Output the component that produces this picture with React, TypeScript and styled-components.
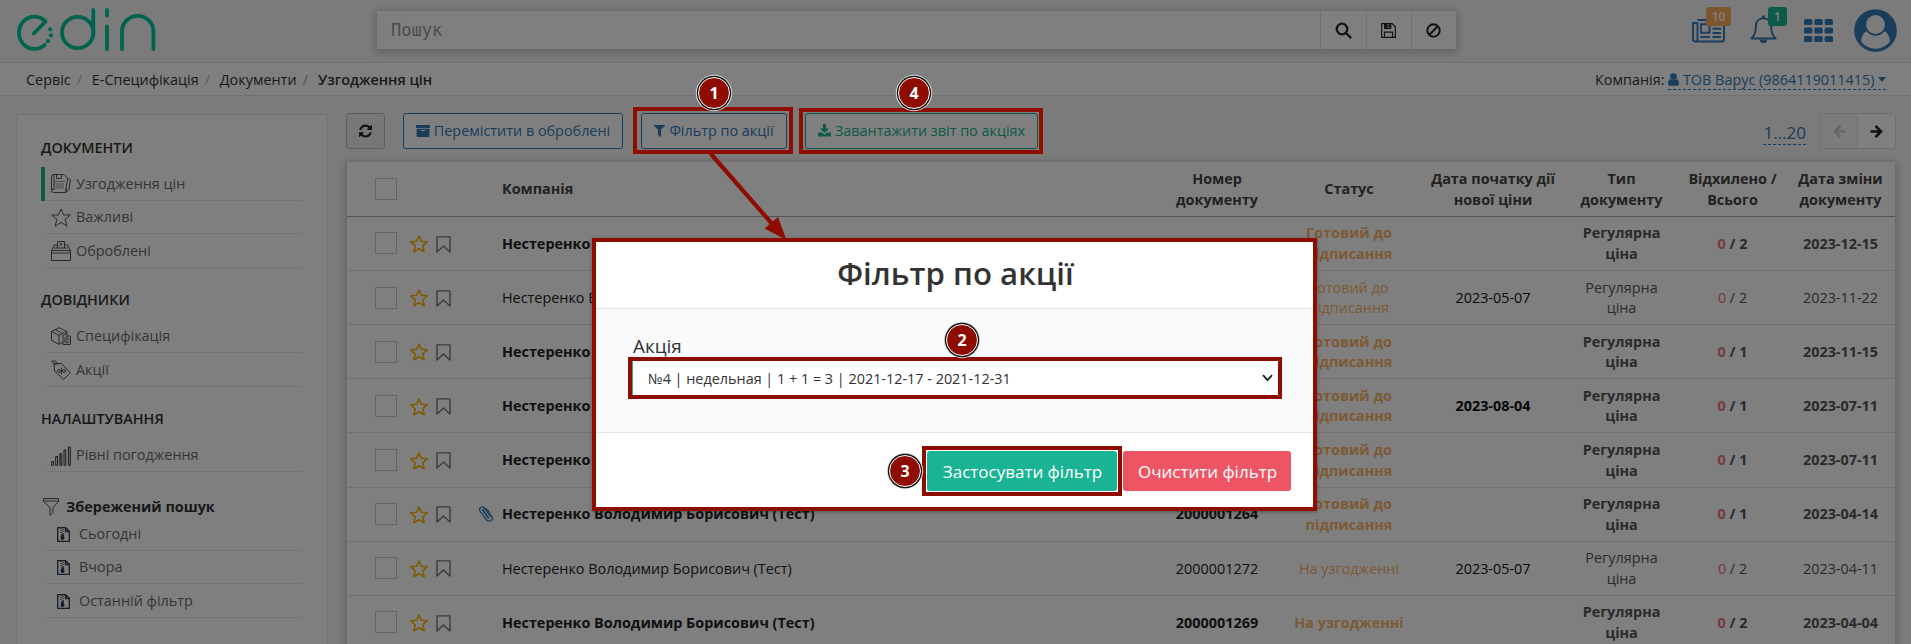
import React from 'react';
import styled, { createGlobalStyle, css } from 'styled-components';

const GlobalStyle = createGlobalStyle`
  *, *::before, *::after { box-sizing: border-box; }
  html, body { margin: 0; padding: 0; overflow: hidden; }
  body {
    background: #f7f7f7;
    color: #333;
    font-family: "Open Sans", "Noto Sans", sans-serif;
    font-size: 14.4px;
    line-height: 1.42857;
  }
  button, input, select { font: inherit; color: inherit; margin: 0; }
  svg { display: block; flex: none; }
`;

const BLUE = '#337ab7';
const GREEN = '#1ab394';
const MARK = '#8f0d00';

const Page = styled.div`
  position: relative;
  width: 1911px;
  height: 644px;
  overflow: hidden;
`;

/* ---------- top bar ---------- */

const TopBar = styled.header`
  display: flex;
  align-items: flex-start;
  height: 63px;
  border-bottom: 1px solid #e3e3e3;
`;
const LogoBox = styled.div`
  width: 377px;
  padding: 6px 0 0 14px;
`;
const SearchBar = styled.div`
  display: flex;
  width: 1079px;
  height: 38px;
  margin-top: 11px;
  background: #fff;
  box-shadow: 0 2px 8px 2px rgba(120, 120, 150, 0.4);
`;
const SearchInput = styled.input`
  flex: 1;
  min-width: 0;
  padding: 0 14px;
  border: 0;
  outline: 0;
  background: transparent;
  font-family: "DejaVu Sans Mono", monospace;
  font-size: 17px;
  &::placeholder { color: #999; opacity: 1; }
`;
const SearchButton = styled.button<{ $w: number }>`
  display: flex;
  align-items: center;
  justify-content: center;
  width: ${p => p.$w}px;
  padding: 0 1px 0 0;
  border: 0;
  border-left: 1px solid #e2e2e2;
  background: transparent;
  color: #222;
`;
const TopIcons = styled.div`
  display: flex;
  align-items: flex-start;
  margin-left: 236px;
  color: ${BLUE};
`;
const TopIcon = styled.div<{ $ml?: number; $mt: number }>`
  position: relative;
  margin-left: ${p => p.$ml ?? 0}px;
  margin-top: ${p => p.$mt}px;
`;
const Badge = styled.span<{ $bg: string; $x: number; $y: number; $w: number }>`
  position: absolute;
  left: ${p => p.$x}px;
  top: ${p => p.$y}px;
  width: ${p => p.$w}px;
  height: 19px;
  border-radius: 3px;
  background: ${p => p.$bg};
  color: #fff;
  font-size: 12px;
  font-weight: 600;
  line-height: 19px;
  text-align: center;
`;

/* ---------- breadcrumbs ---------- */

const CrumbBar = styled.nav`
  display: flex;
  justify-content: space-between;
  height: 33px;
  padding: 0 25px 0 26px;
  border-bottom: 1px solid #e3e3e3;
  background: #fff;
`;
const Crumbs = styled.ol`
  display: flex;
  margin: 0;
  padding: 0;
  list-style: none;
  line-height: 33px;
`;
const Crumb = styled.li`
  & + &::before { content: "/"; padding: 0 9.8px 0 6px; color: #bbb; }
  &:last-child { font-weight: 600; }
`;
const Company = styled.div`
  display: flex;
  align-items: flex-start;
  gap: 4px;
  line-height: 21px;
  padding-top: 6px;
`;
const CompanyLink = styled.a`
  display: flex;
  align-items: center;
  gap: 3.5px;
  height: 21px;
  color: ${BLUE};
  border-bottom: 1px dashed ${BLUE};
`;

/* ---------- layout ---------- */

const Body = styled.div`
  display: flex;
  align-items: flex-start;
  padding: 17px 15px 0 16px;
`;
const Sidebar = styled.aside`
  width: 312px;
  height: 620px;
  margin-top: 1px;
  padding: 23px 24px;
  border: 1px solid #e4e4ee;
  background: #fff;
`;
const Group = styled.section<{ $mb: number; $gap: number }>`
  margin-bottom: ${p => p.$mb}px;
  ul { margin: ${p => p.$gap}px 0 0; padding: 0; list-style: none; }
`;
const GroupTitle = styled.h4`
  display: flex;
  align-items: center;
  height: 21px;
  margin: 0;
  font-size: 14.4px;
  font-weight: 600;
  color: #333;
`;
const SavedTitle = styled(GroupTitle)`
  gap: 7px;
  padding: 1px 0 0 2px;
  font-weight: 700;
`;
const SideItem = styled.li<{ $active?: boolean; $saved?: boolean }>`
  display: flex;
  align-items: center;
  gap: ${p => (p.$saved ? 9 : 5)}px;
  height: 33.5px;
  margin-left: 4px;
  padding: 2px 0 0 ${p => (p.$saved ? 12 : 6)}px;
  border-bottom: 1px solid #e7eaec;
  color: #676a6c;
  ${p => p.$active && css`box-shadow: -4px 0 0 ${GREEN};`}
`;
const Main = styled.main`
  width: 1550px;
  margin-left: 18px;
`;
const Toolbar = styled.div`
  display: flex;
  height: 36px;
`;
const ToolButton = styled.button<{ $w: number; $ml?: number; $color: string; $fill?: string }>`
  display: flex;
  align-items: center;
  justify-content: center;
  gap: 4px;
  width: ${p => p.$w}px;
  height: 36px;
  margin-left: ${p => p.$ml ?? 0}px;
  padding: 0;
  border: 1px solid ${p => p.$color};
  border-radius: 3px;
  background: ${p => p.$fill ?? '#fff'};
  color: ${p => p.$color};
  white-space: nowrap;
`;
const RefreshButton = styled(ToolButton)`
  border-color: #bbb;
  color: #222;
`;
const Pager = styled.div`
  display: flex;
  margin-left: auto;
`;
const Range = styled.a`
  height: 32px;
  margin-right: 14px;
  border-bottom: 1px dashed ${BLUE};
  color: ${BLUE};
  font-size: 17px;
  line-height: 39px;
`;
const PageButton = styled.button<{ $side: 'l' | 'r' }>`
  display: flex;
  align-items: center;
  justify-content: center;
  width: ${p => (p.$side === 'l' ? 37 : 39)}px;
  height: 36px;
  padding: 0;
  border: 1px solid #e0e0e0;
  border-right-width: ${p => (p.$side === 'l' ? 0 : 1)}px;
  border-radius: ${p => (p.$side === 'l' ? '3px 0 0 3px' : '0 3px 3px 0')};
  background: ${p => (p.$side === 'l' ? '#f9f9f9' : '#fff')};
  color: ${p => (p.$side === 'l' ? '#ccc' : '#222')};
`;

/* ---------- table ---------- */

const Table = styled.div`
  width: 1548px;
  height: 600px;
  margin: 13px 0 0 1px;
  background: #fff;
  box-shadow: 0 2px 8px 2px rgba(120, 120, 150, 0.4);
`;
const Row = styled.div<{ $bold?: boolean; $head?: boolean }>`
  display: grid;
  grid-template-columns: 62px 61px 32px 645px 140px 124px 164px 93px 129px 87px;
  grid-template-rows: 100%;
  align-items: center;
  height: ${p => (p.$head ? 54.9 : 54.14)}px;
  border-bottom: 1px solid ${p => (p.$head ? '#aaa' : '#dde0e2')};
  font-weight: ${p => (p.$head || p.$bold ? 700 : 400)};
  color: ${p => (p.$head ? '#444' : '#555')};
`;
const Cell = styled.div<{ $color?: string }>`
  padding-top: 1.2px;
  text-align: center;
  white-space: pre;
  color: ${p => p.$color ?? 'inherit'};
  b { font-weight: inherit; color: #ee7280; }
`;
const NameCell = styled(Cell)`
  text-align: left;
`;
const Check = styled.span`
  width: 22px;
  height: 22px;
  margin-left: 28px;
  border: 1px solid #c8c8c8;
`;
const Marks = styled.div`
  display: flex;
  align-items: center;
  gap: 8px;
  padding: 1.500px 0 0 1px;
`;
const Clip = styled.div`
  padding-left: 8px;
`;

/* ---------- modal ---------- */

const Backdrop = styled.div`
  position: absolute;
  inset: 0;
  background: rgba(0, 0, 0, 0.5);
`;
const Modal = styled.div`
  position: absolute;
  left: 592px;
  top: 238px;
  display: flex;
  flex-direction: column;
  width: 725px;
  height: 273px;
  border: 4px solid ${MARK};
  background: #fff;
  box-shadow: 0 1px 4px rgba(0, 0, 0, 0.3);
`;
const ModalHead = styled.div`
  height: 67px;
  padding-left: 2px;
  border-bottom: 1px solid #e5e5e5;
  color: #333;
  font-size: 31.2px;
  font-weight: 600;
  line-height: 62px;
  text-align: center;
`;
const ModalBody = styled.div`
  flex: 1;
  padding: 25px 31px 0 32px;
  background: #f8fafc;
`;
const Label = styled.label`
  display: block;
  height: 23px;
  padding-left: 5px;
  font-size: 18.9px;
  line-height: 25px;
`;
const Highlight = styled.div`
  border: 4px solid ${MARK};
`;
const SelectBox = styled(Highlight)`
  display: flex;
  align-items: center;
  height: 42px;
  background: #fff;
`;
const Select = styled.select`
  flex: 1;
  height: 34px;
  padding: 2px 15px 0;
  border: 0;
  border-left: 1px solid ${GREEN};
  outline: 0;
  appearance: none;
  background: transparent;
  font-size: 14.4px;
`;
const Chevron = styled.span`
  margin-right: 5px;
`;
const ModalFoot = styled.div`
  display: flex;
  justify-content: flex-end;
  height: 75px;
  padding: 13px 22px 0 0;
  border-top: 1px solid #e5e5e5;
`;
const ApplyBox = styled(Highlight)`
  width: 200px;
  height: 50px;
  margin-right: 1px;
  padding: 1px;
`;
const ModalButton = styled.button<{ $bg: string; $w: number; $mt?: number }>`
  width: ${p => p.$w}px;
  height: 40px;
  margin-top: ${p => p.$mt ?? 0}px;
  padding: 2px 0 0 1px;
  border: 0;
  border-radius: 3px;
  background: ${p => p.$bg};
  color: #fff;
  font-size: 17px;
  white-space: nowrap;
`;

/* ---------- step marks ---------- */

const Frame = styled(Highlight)<{ $x: number; $y: number; $w: number; $h: number }>`
  position: absolute;
  left: ${p => p.$x}px;
  top: ${p => p.$y}px;
  width: ${p => p.$w}px;
  height: ${p => p.$h}px;
`;
const Step = styled.div<{ $x: number; $y: number }>`
  position: absolute;
  left: ${p => p.$x - 16}px;
  top: ${p => p.$y - 16}px;
  width: 32px;
  height: 32px;
  border: 1px solid #fff;
  border-radius: 50%;
  background: ${MARK};
  box-shadow: 0 0 0 1.2px #111, 0 0 0 2.2px #ddd;
  color: #fff;
  font-size: 16px;
  font-weight: 700;
  line-height: 30px;
  text-align: center;
`;
const Arrow = styled.svg`
  position: absolute;
  left: 700px;
  top: 150px;
`;

/* ---------- icons ---------- */

const Logo = () => (
  <svg width="146" height="48" viewBox="14 6 146 48" fill="none" stroke="#00c79a" strokeWidth="3.8" strokeLinecap="round" strokeLinejoin="round">
    <path d="M33.8 33.5 45.500 21.500A15.400 16.200 0 1 0 44.7 44.800" />
    <circle cx="77.700" cy="32.500" r="15.700" />
    <path d="M93.300 10v23M107 10v5.500M107 26.500v22.500M122 49V31.500a15.700 15.700 0 0 1 31.400 0V49" />
    <g fill="#00c79a" stroke="none"><circle cx="50.200" cy="29.300" r="2.100" /><circle cx="51" cy="35.300" r="2.100" /><circle cx="48" cy="41.200" r="2.100" /></g>
  </svg>
);
const SearchIcon = () => (
  <svg width="17" height="17" viewBox="0 0 17 17" fill="none" stroke="currentColor" strokeWidth="2.300"><circle cx="7" cy="7" r="5.300" /><path d="m11 11 4.500 4.500" strokeLinecap="round" /></svg>
);
const SaveIcon = () => (
  <svg width="15" height="15" viewBox="0 0 15 15" fill="none" stroke="currentColor" strokeWidth="1.200"><path d="M.7.7h10.500l3.100 3.100v10.500H.7zM3.500 14V9.200h8V14M3.700 1v4.500h6V1" /><path d="M7.300 1.500h1.800v3H7.300z" fill="currentColor" stroke="none" /><path d="M4 1h2.500v4H4z" fill="currentColor" stroke="none" /></svg>
);
const BanIcon = () => (
  <svg width="15" height="15" viewBox="0 0 15 15" fill="none" stroke="currentColor" strokeWidth="2"><circle cx="7.500" cy="7.500" r="6.200" /><path d="m3.300 11.700 8.400-8.400" /></svg>
);
const NewsIcon = () => (
  <svg width="33" height="24" viewBox="0 0 33 24" fill="none" stroke="currentColor" strokeWidth="1.900">
    <path d="M5.500 1H32v19.500a2 2 0 0 1-2 2H3a2 2 0 0 1-2-2V4h4.500v16.500a2 2 0 0 1-2 2" />
    <path d="M9 5.300h8.500v8.500H9zM8.500 18h9.500M20.500 9.800H29M20.500 14H29M20.500 18H29M20.500 5.500H29" />
  </svg>
);
const BellIcon = () => (
  <svg width="27" height="29" viewBox="0 0 27 29" fill="none" stroke="currentColor" strokeWidth="1.900">
    <path d="M13.500 3.200c-4.600 0-7.600 3.400-7.600 7.700 0 6.200-1.500 9.900-4.600 12.600h24.400c-3.100-2.700-4.600-6.400-4.600-12.600 0-4.300-3-7.700-7.600-7.700z" strokeLinejoin="round" />
    <path d="M12 1.700a1.500 1.500 0 0 1 3 0v1.500h-3zM9.700 24.500h7.600a3.800 3.800 0 0 1-7.600 0z" fill="currentColor" stroke="none" />
  </svg>
);
const GridIcon = () => (
  <svg width="29" height="23" viewBox="0 0 29 23" fill="currentColor">
    {[0, 8.5, 17].map(y => [0, 10.3, 20.6].map(x => <rect key={`${x}-${y}`} x={x} y={y} width="8.400" height="6" rx="1.500" />))}
  </svg>
);
const AvatarIcon = () => (
  <svg width="43" height="43" viewBox="0 0 43 43"><circle cx="21.500" cy="21.500" r="21.300" fill={BLUE} /><path d="M7 32.500c.8-7 3.600-10 7.200-10.700h14.600c3.600.7 6.400 3.700 7.200 10.700a18.200 18.200 0 0 1-29 0z" fill="#f7f7f7" /><circle cx="21.500" cy="15.800" r="11" fill={BLUE} /><circle cx="21.500" cy="15.500" r="9.400" fill="#f7f7f7" /></svg>
);
const UserIcon = () => (
  <svg width="11" height="13" viewBox="0 0 11 13" fill="currentColor"><circle cx="5.500" cy="3.600" r="3.300" /><path d="M2.300 5.900C.8 6.400 0 8.200 0 10.500 0 12 .9 12.800 2 12.800h7c1.100 0 2-.8 2-2.300 0-2.300-.8-4.100-2.300-4.600a4.600 4.600 0 0 1-6.400 0z" /></svg>
);
const CaretIcon = () => (
  <svg width="8" height="5" viewBox="0 0 8 5" fill="currentColor"><path d="M0 0h8L4 4.900z" /></svg>
);
const RefreshIcon = () => (
  <svg width="13" height="14" viewBox="0 90 1536 1600" fill="currentColor"><path d="M1511 1056q0 5-1 7-64 268-268 434.500t-478 166.500q-146 0-282.500-55t-243.500-157l-129 129q-19 19-45 19t-45-19-19-45v-448q0-26 19-45t45-19h448q26 0 45 19t19 45-19 45l-137 137q71 66 161 102t187 36q134 0 250-65t186-179q11-17 53-117 8-23 30-23h192q13 0 22.500 9.500t9.500 22.500zm25-800v448q0 26-19 45t-45 19h-448q-26 0-45-19t-19-45 19-45l138-138q-148-137-349-137-134 0-250 65t-186 179q-11 17-53 117-8 23-30 23h-199q-13 0-22.500-9.500t-9.500-22.500v-7q65-268 270-434.500t480-166.500q146 0 284 55.500t245 156.500l130-129q19-19 45-19t45 19 19 45z" /></svg>
);
const ArchiveIcon = () => (
  <svg width="14" height="12" viewBox="0 0 14 12" fill="currentColor"><path d="M0 0h14v3H0zM.6 3.700h12.800v7.600a.7.700 0 0 1-.7.700H1.300a.7.700 0 0 1-.7-.7zM5 5v1.100h4V5z" fillRule="evenodd" /></svg>
);
const FunnelIcon = () => (
  <svg width="11" height="12" viewBox="0 0 11 12" fill="currentColor"><path d="M.5 0h10c.5 0 .7.500.3.900L7 4.700v6.800c0 .5-.4.600-.8.300L4.200 10a.7.700 0 0 1-.2-.5V4.700L.2.900C-.2.500 0 0 .5 0z" /></svg>
);
const DownloadIcon = () => (
  <svg width="13" height="14" viewBox="0 0 13 14" fill="currentColor"><path d="M5 0h3v4.500h3L6.500 9 2 4.500h3zM0 8.500h4l2.500 2.300L9 8.500h4v4H0z" /></svg>
);
const PageArrow = ({ flip }: { flip?: boolean }) => (
  <svg width="13" height="13" viewBox="0 0 13 13" fill="none" stroke="currentColor" strokeWidth="2.600" strokeLinejoin="miter"><path d={flip ? 'M12.500 6.500H2.500M7.500.9 1.900 6.500l5.600 5.600' : 'M.5 6.500h10M5.500.9l5.600 5.600-5.600 5.600'} /></svg>
);
const StarIcon = () => (
  <svg width="18" height="18" viewBox="0 0 18 18" fill="none" stroke="#ffb400" strokeWidth="1.600" strokeLinejoin="round"><path d="m9 1 2.300 5.300 5.900.6-4.400 3.900 1.300 5.900L9 13.700l-5.100 3 1.300-5.900L.8 6.900l5.900-.6z" /></svg>
);
const BookmarkIcon = () => (
  <svg width="15" height="17" viewBox="0 0 15 17" fill="none" stroke="#777" strokeWidth="1.400" strokeLinejoin="round"><path d="M1 .9h13v15.200l-6.500-6-6.500 6z" /></svg>
);
const ClipIcon = () => (
  <svg width="16" height="18" viewBox="0 0 16 18" fill="none" stroke="#2a7fc0" strokeWidth="1.300" strokeLinecap="round"><path d="M11 5.500 6 1.800C3.200-.2-.3 3 1.800 6l6.500 8.800c2.600 3.400 8 1.200 6.300-3L9 4C7.500 2 4.500 3.700 5.800 6l5.200 7" transform="translate(.5 .8) scale(.93)" /><path d="M4 4.500 10 13M6.500 3.200l5.800 8.300" /></svg>
);
const sideIcon = { width: 20, height: 20, viewBox: '0 0 20 20', fill: 'none', stroke: '#444', strokeWidth: 0.9 } as const;
const DocPenIcon = () => (
  <svg {...sideIcon}><path d="M3 .5h10l3.500 3.500v2M.5 3v13.500a2 2 0 0 0 2 2H15v-4M3 .5A2.500 2.500 0 0 0 .5 3M3 .5V15.500H.500M5.500.5v4h5v-4M18 4.500l1.500 1-1.500 10-2.500 2.500-.5-3 1.500-9z" /><path d="M4 7.500h10M4.500 10h8.500M4.500 12h8.500M4.500 14h8" strokeOpacity=".6" /></svg>
);
const SideStar = () => (
  <svg {...sideIcon}><path d="m10 1 2.600 6h6.700l-5.300 4.300 2 7-6-4-6 4 2-7L.7 7h6.700z" /></svg>
);
const BoxIcon = () => (
  <svg {...sideIcon}><path d="M.5 12v7.500h19V12zM.5 12v-2L3 4h3.500M13.500 4h3.500l2.500 6v2M.5 9.500h19M6.500 7V.5h7V7M3 7h14M8.500 4.500l3-2.500M9 2l2 2.500" /></svg>
);
const PackageIcon = () => (
  <svg {...sideIcon}><path d="M.5 4.500 8 .7l8 3.800-8 3.800zM.5 4.500v9L8 17.300l4-2M8 8.300v9M16 4.500v2M4 2.500l8 4M12 8.500l4-2v11h-4zM16 9h3.500v8.500H16M13 11h2M13 13h2M13 15h2M17 12h1.500M17 15h1.500" /></svg>
);
const TagIcon = () => (
  <svg {...sideIcon}><path d="M3 3.500h7.500l8.800 9.300-6.600 6.500L3.500 11zM4.500 5.500l-4-4.500h4l2 4" /><circle cx="8" cy="11" r="1.500" /><circle cx="13" cy="11" r="1.500" /><path d="M10.500 7.500v7" /></svg>
);
const LevelsIcon = () => (
  <svg {...sideIcon} stroke="#222"><path d="M.7 15.500h1.800v3.800H.7zM4.700 10.500h1.800v8.800H4.700zM13 4h1.800v15.300H13zM17.500 1h1.800v18.300h-1.800z" /><path d="M8.700 7.500h2.200v11.800H8.700z" fill="#888" stroke="#555" /></svg>
);
const FilterOutline = () => (
  <svg width="16" height="18" viewBox="0 0 16 18" fill="none" stroke="#555"><path d="M.5.5h15v3l-5.500 6v5l-3 3v-8l-6.500-6zM.5 3h15" /></svg>
);
const ZipIcon = () => (
  <svg width="13" height="15" viewBox="0 0 13 15" fill="none" stroke="#2f4050" strokeWidth="1.300"><path d="M.7.7h8l3.600 3.500v10.100H.7zM8.500 1v3.500H12" /><path d="M4 1v6M6 2v5" strokeDasharray="1 1" /><path d="M4.500 7h2l1 4a2 2 0 1 1-4 0z" fill="#2f4050" stroke="none" /></svg>
);

/* ---------- data ---------- */

const groups = [
  { title: 'ДОКУМЕНТИ', gap: 8, mb: 22, items: [
    { text: 'Узгодження цін', icon: <DocPenIcon />, active: true },
    { text: 'Важливі', icon: <SideStar /> },
    { text: 'Оброблені', icon: <BoxIcon /> } ] },
  { title: 'ДОВІДНИКИ', gap: 9, mb: 22, items: [
    { text: 'Специфікація', icon: <PackageIcon /> },
    { text: 'Акції', icon: <TagIcon /> } ] },
  { title: 'НАЛАШТУВАННЯ', gap: 9, mb: 24, items: [
    { text: 'Рівні погодження', icon: <LevelsIcon /> } ] },
];
const saved = ['Сьогодні', 'Вчора', 'Останній фільтр'];

const READY = 'Готовий до\nпідписання';
const WAIT = 'На узгодженні';
const rows = [
  { bold: true, num: '2000001301', status: READY, start: '', total: 2, date: '2023-12-15' },
  { bold: false, num: '2000001296', status: READY, start: '2023-05-07', total: 2, date: '2023-11-22' },
  { bold: true, num: '2000001290', status: READY, start: '', total: 1, date: '2023-11-15' },
  { bold: true, num: '2000001283', status: READY, start: '2023-08-04', total: 1, date: '2023-07-11' },
  { bold: true, num: '2000001282', status: READY, start: '', total: 1, date: '2023-07-11' },
  { bold: true, clip: true, num: '2000001264', status: READY, start: '', total: 1, date: '2023-04-14' },
  { bold: false, num: '2000001272', status: WAIT, start: '2023-05-07', total: 2, date: '2023-04-11' },
  { bold: true, num: '2000001269', status: WAIT, start: '', total: 2, date: '2023-04-04' },
];

export default function App() {
  return (
    <Page>
      <GlobalStyle />
      <TopBar>
        <LogoBox><Logo /></LogoBox>
        <SearchBar>
          <SearchInput placeholder="Пошук" />
          <SearchButton $w={46}><SearchIcon /></SearchButton>
          <SearchButton $w={45}><SaveIcon /></SearchButton>
          <SearchButton $w={45}><BanIcon /></SearchButton>
        </SearchBar>
        <TopIcons>
          <TopIcon $mt={19}><NewsIcon /><Badge $bg="#f8ac59" $x={14} $y={-12} $w={25}>10</Badge></TopIcon>
          <TopIcon $ml={25} $mt={15}><BellIcon /><Badge $bg={GREEN} $x={18} $y={-8} $w={19}>1</Badge></TopIcon>
          <TopIcon $ml={27} $mt={19}><GridIcon /></TopIcon>
          <TopIcon $ml={21} $mt={9}><AvatarIcon /></TopIcon>
        </TopIcons>
      </TopBar>

      <CrumbBar>
        <Crumbs>
          <Crumb>Сервіс</Crumb>
          <Crumb>Е-Специфікація</Crumb>
          <Crumb>Документи</Crumb>
          <Crumb>Узгодження цін</Crumb>
        </Crumbs>
        <Company>
          Компанія:
          <CompanyLink><UserIcon />ТОВ Варус (9864119011415)<CaretIcon /></CompanyLink>
        </Company>
      </CrumbBar>

      <Body>
        <Sidebar>
          {groups.map(g => (
            <Group key={g.title} $mb={g.mb} $gap={g.gap}>
              <GroupTitle>{g.title}</GroupTitle>
              <ul>
                {g.items.map(i => (
                  <SideItem key={i.text} $active={'active' in i && i.active}>{i.icon}{i.text}</SideItem>
                ))}
              </ul>
            </Group>
          ))}
          <Group $mb={0} $gap={0}>
            <SavedTitle><FilterOutline />Збережений пошук</SavedTitle>
            <ul>{saved.map(s => <SideItem key={s} $saved><ZipIcon />{s}</SideItem>)}</ul>
          </Group>
        </Sidebar>

        <Main>
          <Toolbar>
            <RefreshButton $w={39} $color="#222" $fill="#eee"><RefreshIcon /></RefreshButton>
            <ToolButton $w={220} $ml={18} $color={BLUE}><ArchiveIcon />Перемістити в оброблені</ToolButton>
            <ToolButton $w={146} $ml={18} $color={BLUE}><FunnelIcon />Фільтр по акції</ToolButton>
            <ToolButton $w={233} $ml={18} $color={GREEN}><DownloadIcon />Завантажити звіт по акціях</ToolButton>
            <Pager>
              <Range>1...20</Range>
              <PageButton $side="l"><PageArrow flip /></PageButton>
              <PageButton $side="r"><PageArrow /></PageButton>
            </Pager>
          </Toolbar>
          <Table>
            <Row $head>
              <Check />
              <span />
              <span />
              <NameCell>Компанія</NameCell>
              <Cell>{'Номер\nдокументу'}</Cell>
              <Cell>Статус</Cell>
              <Cell>{'Дата початку дії\nнової ціни'}</Cell>
              <Cell>{'Тип\nдокументу'}</Cell>
              <Cell>{'Відхилено /\nВсього'}</Cell>
              <Cell>{'Дата зміни\nдокументу'}</Cell>
            </Row>
            {rows.map(r => (
              <Row key={r.num} $bold={r.bold}>
                <Check />
                <Marks><StarIcon /><BookmarkIcon /></Marks>
                <Clip>{r.clip && <ClipIcon />}</Clip>
                <NameCell $color="#222">Нестеренко Володимир Борисович (Тест)</NameCell>
                <Cell $color="#222">{r.num}</Cell>
                <Cell $color="#f8b46a">{r.status}</Cell>
                <Cell $color="#111">{r.start}</Cell>
                <Cell>{'Регулярна\nціна'}</Cell>
                <Cell><b>0</b> / {r.total}</Cell>
                <Cell>{r.date}</Cell>
              </Row>
            ))}
          </Table>
        </Main>
      </Body>

      <Backdrop />
      <Frame $x={633} $y={107} $w={160} $h={47} />
      <Frame $x={799} $y={108} $w={244} $h={46} />
      <Modal>
        <ModalHead>Фільтр по акції</ModalHead>
        <ModalBody>
          <Label htmlFor="promo">Акція</Label>
          <SelectBox>
            <Select id="promo"><option>№4 | недельная | 1 + 1 = 3 | 2021-12-17 - 2021-12-31</option></Select>
            <Chevron><svg width="11" height="8" viewBox="0 0 11 8" fill="none" stroke="#222" strokeWidth="1.800"><path d="m1 1.200 4.500 5L10 1.200" /></svg></Chevron>
          </SelectBox>
        </ModalBody>
        <ModalFoot>
          <ApplyBox><ModalButton $bg={GREEN} $w={190}>Застосувати фільтр</ModalButton></ApplyBox>
          <ModalButton $bg="#ed5565" $w={168} $mt={5}>Очистити фільтр</ModalButton>
        </ModalFoot>
      </Modal>
      <Arrow width="100" height="92" viewBox="700 150 100 92"><path d="m710.500 153.500 63 72" stroke={MARK} strokeWidth="4.200" /><path d="m786.500 240-22-11.500 13.500-11.500z" fill={MARK} /></Arrow>
      <Step $x={714} $y={93}>1</Step>
      <Step $x={914} $y={93}>4</Step>
      <Step $x={962} $y={340}>2</Step>
      <Step $x={905} $y={471}>3</Step>
    </Page>
  );
}
